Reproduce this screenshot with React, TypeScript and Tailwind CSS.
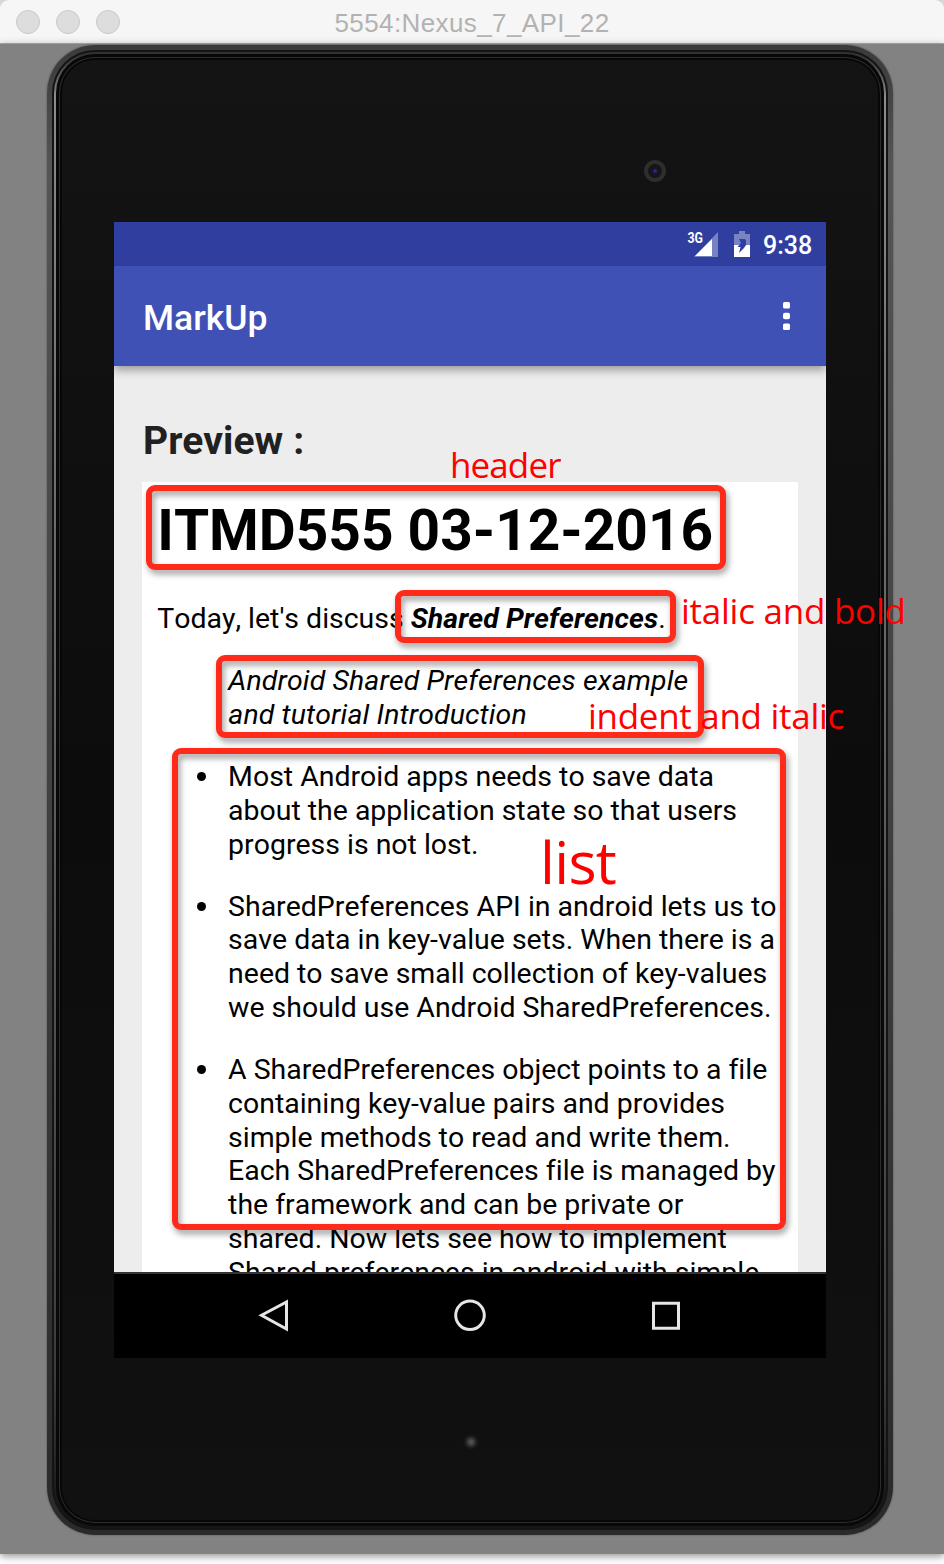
import type { ReactNode } from "react";

const notes = [
  [
    "Most Android apps needs to save data",
    "about the application state so that users",
    "progress is not lost.",
  ],
  [
    "SharedPreferences API in android lets us to",
    "save data in key-value sets. When there is a",
    "need to save small collection of key-values",
    "we should use Android SharedPreferences.",
  ],
  [
    "A SharedPreferences object points to a file",
    "containing key-value pairs and provides",
    "simple methods to read and write them.",
    "Each SharedPreferences file is managed by",
    "the framework and can be private or",
    "shared. Now lets see how to implement",
    "Shared preferences in android with simple",
  ],
];

function TitleBar() {
  return (
    <div className="bg-[#d8d8d8]">
      <header className="flex h-11 items-center rounded-t-[9px] border-b border-[#b4b4b4] bg-[#f6f6f6] px-4">
        <div className="flex flex-1 gap-4">
          <span className="size-6 rounded-full border border-[#c9c9c9] bg-[#dddddd]" />
          <span className="size-6 rounded-full border border-[#c9c9c9] bg-[#dddddd]" />
          <span className="size-6 rounded-full border border-[#c9c9c9] bg-[#dddddd]" />
        </div>
        <h1 className="pt-[3px] font-['Liberation_Sans',sans-serif] text-[26px] tracking-[0.4px] text-[#b2b2b2]">
          5554:Nexus_7_API_22
        </h1>
        <div className="flex-1" />
      </header>
    </div>
  );
}

function Bezel({ children }: { children: ReactNode }) {
  return (
    <div className="ml-[47px] h-[1490px] w-[846px] rounded-[48px] bg-linear-to-b from-[#3a3a3a] via-[#555555] via-8% to-[#2a2a2a] p-[5px] shadow-[0_0_2px_#4a4a4a]">
      <div className="h-full rounded-[43px] bg-[#141414] p-[2px]">
        <div className="h-full rounded-[41px] bg-[linear-gradient(to_bottom,#303030_0%,#3a3a3a_0.6%,#8c8c8c_3%,#727272_25%,#3c3c3c_90%,#161616_99%)] p-[2px]">
          <div className="h-full rounded-[39px] bg-[#080808] p-[3px]">
            <div className="h-full rounded-[36px] bg-[#2d2d2d] p-px">
              <div className="h-full rounded-[35px] bg-[#070707] p-[2px]">
                <div className="relative h-full rounded-[33px] bg-linear-to-b from-[#141414] via-[#0c0c0c] to-[#111111] pl-[52px] pt-[162px]">
                  {children}
                </div>
              </div>
            </div>
          </div>
        </div>
      </div>
    </div>
  );
}

function StatusBar() {
  return (
    <div className="flex h-11 items-center bg-[#303f9f] pl-[573px] text-white">
      <svg width="32" height="28" viewBox="0 0 32 28" className="shrink-0">
        <path d="M7 27 31 2v25z" fill="#7983c2" />
        <path d="M8 26 25 9v17z" fill="#fff" />
        <text x="0.5" y="12.500" fill="#fff" fontSize="14" fontWeight="700" fontFamily="Roboto" textLength="15.500" lengthAdjust="spacingAndGlyphs">
          3G
        </text>
      </svg>
      <svg width="16" height="26" viewBox="0 0 16 26" className="ml-[15px] shrink-0">
        <path d="M5 0h6v3h5v12H0V3h5z" fill="#7983c2" />
        <path d="M0 14h16v12H0z" fill="#fff" />
        <path d="M5 8h6l1 2v4l-2 3-5 5 1.500-6H3.500L7 12z" fill="#303f9f" />
      </svg>
      <span className="ml-[13px] mt-[3px] text-[25px] font-medium leading-none">9:38</span>
    </div>
  );
}

function Toolbar() {
  return (
    <div className="relative z-10 flex h-[100px] items-center justify-between bg-[#3f51b5] pl-[29px] pr-[36px] shadow-[0_4px_9px_rgba(0,0,0,0.36)] [clip-path:inset(0_0_-20px_0)]">
      <h2 className="mt-[6px] text-[35.500px] font-medium leading-none text-white">MarkUp</h2>
      <svg width="7" height="28" viewBox="0 0 7 28" fill="#fff">
        <rect width="7" height="6.500" rx="1.500" />
        <rect y="10.700" width="7" height="6.500" rx="2" />
        <rect y="21.400" width="7" height="6.500" rx="1.500" />
      </svg>
    </div>
  );
}

function Preview() {
  return (
    <main className="h-[908px] overflow-hidden border-b-2 border-[#333333] bg-[#ededed] px-7 pt-[55px]">
      <h3 className="pl-px text-[39px] font-bold leading-[40px] tracking-[0.1px] text-[#212121]">Preview :</h3>
      <article className="mt-[21px] h-[900px] whitespace-nowrap bg-white px-[15.300px] pt-[15px] text-[28.45px] leading-[33.75px] text-black [font-kerning:none] [font-variant-ligatures:none]">
        <h4 className="text-[56.8px] font-bold leading-[67.5px]">ITMD555 03-12-2016</h4>
        <p className="mt-[37.400px]">
          Today, let's discuss <strong className="font-bold italic tracking-[0.080px]">Shared Preferences</strong>.
        </p>
        <blockquote className="ml-[71px] mt-[28.500px] italic tracking-[0.130px]">
          Android Shared Preferences example
          <br />
          and tutorial Introduction
        </blockquote>
        <ul className="ml-[71px] space-y-[28.400px] pt-[28.400px]">
          {notes.map((lines) => (
            <li key={lines[0]} className="-ml-[31px] flex gap-[21.800px]">
              <span className="mt-[12px] size-[9px] shrink-0 rounded-full bg-black" />
              <div>
                {lines.map((line) => (
                  <span key={line} className="block">
                    {line}
                  </span>
                ))}
              </div>
            </li>
          ))}
        </ul>
      </article>
    </main>
  );
}

function NavBar() {
  return (
    <nav className="flex h-[84px] items-center justify-center gap-[164px] bg-black">
      <svg width="32" height="34" viewBox="0 0 32 34" fill="none" stroke="#e6e6e6" strokeWidth="3">
        <path d="M3.500 16.300 28.500 3v27z" />
      </svg>
      <svg width="32" height="34" viewBox="0 0 32 34" fill="none" stroke="#e6e6e6" strokeWidth="3">
        <circle cx="16" cy="16.300" r="14.300" />
      </svg>
      <svg width="32" height="34" viewBox="0 0 32 34" fill="none" stroke="#e6e6e6" strokeWidth="3">
        <path d="M3.500 4.200h25v25h-25z" />
      </svg>
    </nav>
  );
}

function Marks() {
  return (
    <div className="pointer-events-none absolute inset-0 z-20 whitespace-nowrap font-['Open_Sans',sans-serif] text-[35px] leading-[40px] text-[#ff0000]">
      <div className="absolute left-[146px] top-[485px] h-[85px] w-[580px] rounded-[9px] border-[6px] border-[#ff2a1a] drop-shadow-[2px_4px_3px_rgba(0,0,0,0.4)]" />
      <div className="absolute left-[395px] top-[590px] h-[53px] w-[281px] rounded-[9px] border-[6px] border-[#ff2a1a] drop-shadow-[2px_4px_3px_rgba(0,0,0,0.4)]" />
      <div className="absolute left-[216px] top-[655px] h-[83px] w-[488px] rounded-[9px] border-[6px] border-[#ff2a1a] drop-shadow-[2px_4px_3px_rgba(0,0,0,0.4)]" />
      <div className="absolute left-[172px] top-[748px] h-[482px] w-[614px] rounded-[9px] border-[6px] border-[#ff2a1a] drop-shadow-[2px_4px_3px_rgba(0,0,0,0.4)]" />
      <span className="absolute left-[450px] top-[445px] tracking-[-0.900px]">header</span>
      <span className="absolute left-[681px] top-[591px] tracking-[-0.250px]">italic and bold</span>
      <span className="absolute left-[588px] top-[696px] tracking-[-0.300px]">indent and italic</span>
      <span className="absolute left-[540px] top-[831px] text-[59px] leading-[60px] tracking-[-0.700px]">list</span>
    </div>
  );
}

export default function App() {
  return (
    <div className="relative h-[1564px] w-[944px] overflow-hidden bg-white font-['Roboto',sans-serif]">
      <TitleBar />
      <div className="h-[1510px] bg-[#828282] pt-px shadow-[0_2px_8px_rgba(0,0,0,0.45)]">
        <Bezel>
          <div className="w-[712px]">
            <StatusBar />
            <Toolbar />
            <Preview />
            <NavBar />
          </div>
          <span className="absolute left-[582px] top-[100px] flex size-[22px] items-center justify-center rounded-full border-[4px] border-[#2e2e2e] bg-[#161616]">
            <span className="size-[4px] rounded-full bg-[#2026a0]" />
          </span>
          <span className="absolute left-[405px] top-[1378px] size-[8px] rounded-full bg-[#606060] blur-[2px]" />
        </Bezel>
      </div>
      <Marks />
    </div>
  );
}
